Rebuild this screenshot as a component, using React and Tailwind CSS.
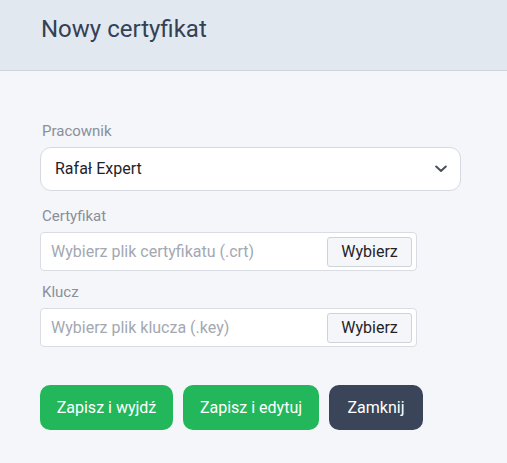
import React from "react";

function FileInput({ placeholder }) {
  return (
    <div className="flex h-[39px] w-[377px] items-center justify-between rounded-[4px] border border-[#d9dce2] bg-white pl-[10px] pr-[4px]">
      <span className="text-[16px] text-[#a3a8b2]">{placeholder}</span>
      <button className="flex h-[30px] w-[85px] items-center justify-center rounded-[3px] border border-[#cfd3d9] bg-[#f4f6f9] text-[16px] text-[#1f2328]">
        Wybierz
      </button>
    </div>
  );
}

export default function App() {
  return (
    <div className="min-h-[463px] w-[507px] bg-[#f4f6f9] font-['Roboto',sans-serif]">
      <div className="h-[71px] border-b border-[#cdd4df] bg-[#e2e8f0] pl-[41px] pt-[13px]">
        <h1 className="text-2xl font-normal text-[#334155]">Nowy certyfikat</h1>
      </div>
      <div className="pl-[40px] pt-[50px]">
        <div>
          <div className="mb-[6px] pl-[2px] text-[15px] leading-5 text-[#8a8f99]">Pracownik</div>
          <div className="flex h-[44px] w-[421px] items-center justify-between rounded-[11px] border border-[#d6d9df] bg-white pl-[14px] pr-[13px]">
            <span className="text-[16px] text-[#1f2328]">Rafał Expert</span>
            <svg width="12" height="8" viewBox="0 0 12 8" fill="none">
              <polyline points="1.2,1.5 6,6 10.8,1.5" stroke="#4b5058" strokeWidth="2" strokeLinecap="round" strokeLinejoin="round" />
            </svg>
          </div>
        </div>
        <div className="mt-[15px]">
          <div className="mb-[6px] pl-[2px] text-[15px] leading-5 text-[#8a8f99]">Certyfikat</div>
          <FileInput placeholder="Wybierz plik certyfikatu (.crt)" />
        </div>
        <div className="mt-[11px]">
          <div className="mb-[6px] pl-[2px] text-[15px] leading-5 text-[#8a8f99]">Klucz</div>
          <FileInput placeholder="Wybierz plik klucza (.key)" />
        </div>
        <div className="mt-[38px] flex gap-[10px]">
          <button className="flex h-[45px] w-[133px] items-center justify-center rounded-[10px] bg-[#22b75b] text-[16px] font-normal text-white">
            Zapisz i wyjdź
          </button>
          <button className="flex h-[45px] w-[136px] items-center justify-center rounded-[10px] bg-[#22b75b] text-[16px] font-normal text-white">
            Zapisz i edytuj
          </button>
          <button className="flex h-[45px] w-[94px] items-center justify-center rounded-[10px] bg-[#3a4559] text-[16px] font-normal text-white">
            Zamknij
          </button>
        </div>
      </div>
    </div>
  );
}
